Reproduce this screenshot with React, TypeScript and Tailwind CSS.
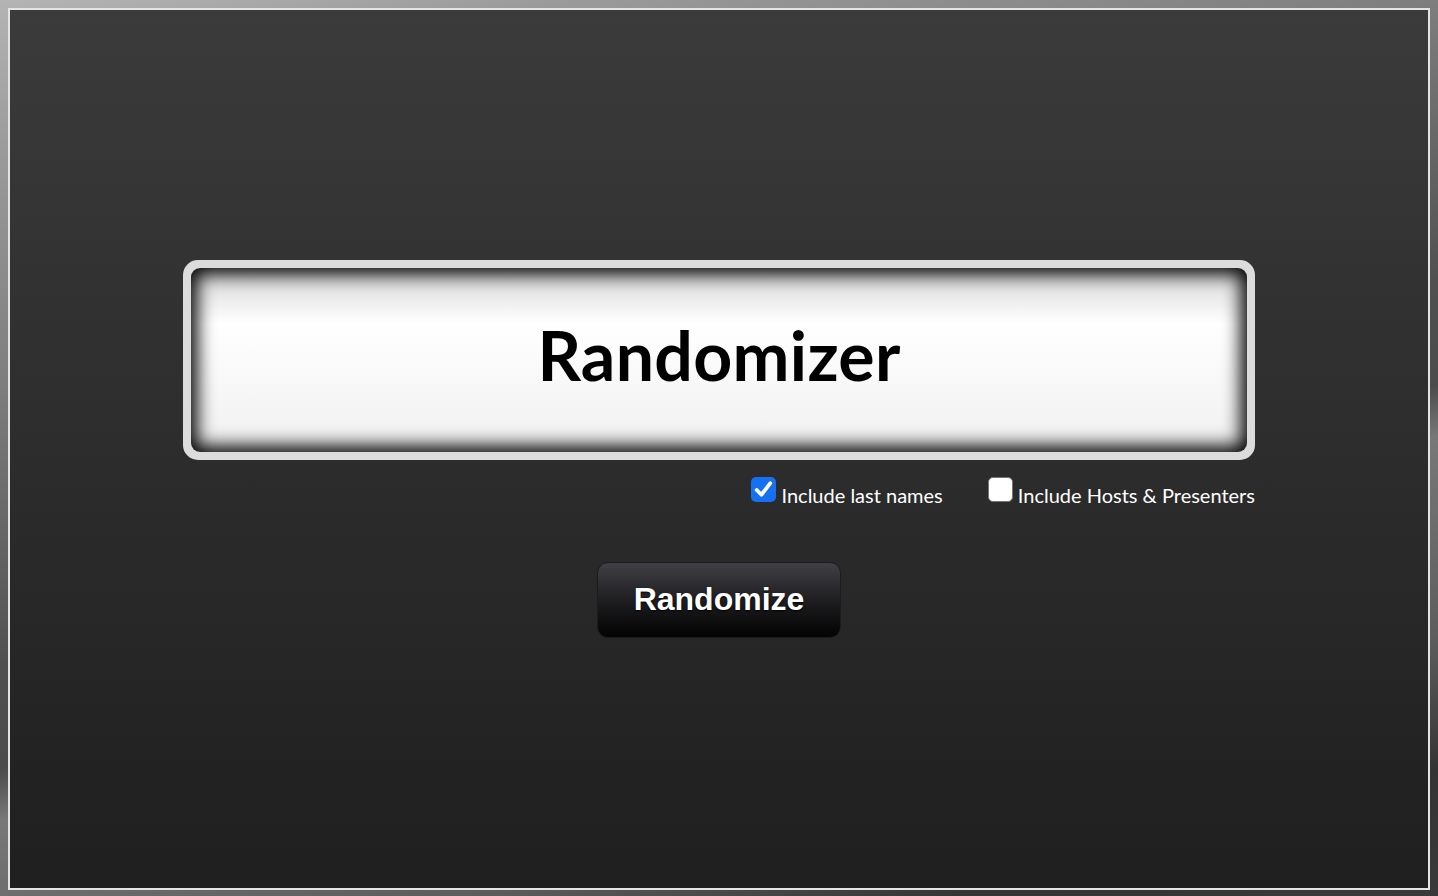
import { useState } from "react";

const Check = ({
  checked,
  label,
  onToggle,
}: {
  checked: boolean;
  label: string;
  onToggle: () => void;
}) => (
  <label className="flex cursor-pointer items-start gap-[5px]" onClick={onToggle}>
    {checked ? (
      <span className="flex h-[25px] w-[25px] items-center justify-center rounded-[5px] bg-[#1670f2]">
        <svg width="21" height="21" viewBox="0 0 20 20" fill="none">
          <path
            d="M3.5 10.5 L8 15 L16.5 4"
            stroke="#fff"
            strokeWidth="3.6"
            strokeLinecap="round"
            strokeLinejoin="round"
          />
        </svg>
      </span>
    ) : (
      <span className="h-[25px] w-[25px] rounded-[5px] border border-[#767676] bg-white" />
    )}
    <span className="mt-[3px] text-[20px] leading-[30px] text-white">{label}</span>
  </label>
);

export default function App() {
  const [lastNames, setLastNames] = useState(true);
  const [hosts, setHosts] = useState(false);

  return (
    <div
      className="min-h-screen p-[8px] font-['Lato','Noto_Sans',sans-serif]"
      style={{
        background:
          "linear-gradient(165deg, #b4b4b4 0%, #9a9a9a 12%, #7e7e7e 30%, #505050 52%, #4c4c4c 60%, #787878 64%, #5c5c5c 80%, #343434 90%, #3a3a3a 100%)",
      }}
    >
      {/* FRAME */}
      <div className="flex h-[882px] flex-col items-center justify-center border-2 border-[#e4e4e4] bg-linear-to-b from-[#3b3b3b] to-[#1f1f1f]">
        {/* DISPLAY */}
        <div className="h-[200px] w-[1072px] rounded-[15px] border-[8px] border-[#dcdcdc] bg-[#dcdcdc]">
          <div className="flex h-full w-full items-center justify-center rounded-[9px] bg-linear-to-b from-[#d4d4d4] via-white via-30% to-[#f0f0f0] shadow-[inset_0_0_18px_6px_#000]">
            <h1 className="mt-[-10px] text-[68px] font-bold tracking-[0.3px] text-black">
              Randomizer
            </h1>
          </div>
        </div>

        {/* OPTIONS */}
        <div className="mt-[17px] flex h-[30px] w-[1072px] justify-end gap-[45px]">
          <Check
            checked={lastNames}
            label="Include last names"
            onToggle={() => setLastNames(!lastNames)}
          />
          <Check
            checked={hosts}
            label="Include Hosts & Presenters"
            onToggle={() => setHosts(!hosts)}
          />
        </div>

        {/* BUTTON */}
        <button className="mt-[55px] h-[76px] w-[244px] rounded-[11px] border border-[#1b1b1b] bg-linear-to-b from-[#404046] to-[#040404] pb-[3px] font-['Liberation_Sans',Arial,sans-serif] text-[32px] font-bold text-white [text-shadow:0_1px_2px_#000]">
          Randomize
        </button>
      </div>
    </div>
  );
}
